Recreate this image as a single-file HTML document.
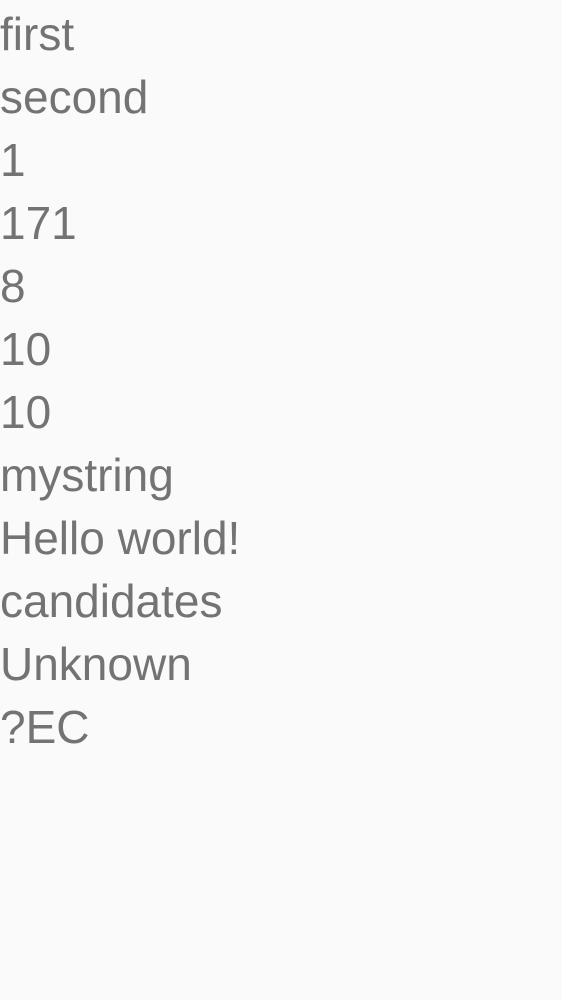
<!DOCTYPE html>
<html><head><meta charset="utf-8"><style>
html,body{margin:0;padding:0;background:#fafafa;width:562px;height:1000px;overflow:hidden}
body{font-family:"Liberation Sans",sans-serif;font-size:46px;line-height:63px;color:#737373;padding-top:3px;box-sizing:border-box}
div{white-space:nowrap;margin-left:0}
</style></head><body>
<div>first</div><div>second</div><div>1</div><div>171</div><div>8</div><div>10</div><div>10</div><div>mystring</div><div>Hello world!</div><div>candidates</div><div>Unknown</div><div>?EC</div>
</body></html>
